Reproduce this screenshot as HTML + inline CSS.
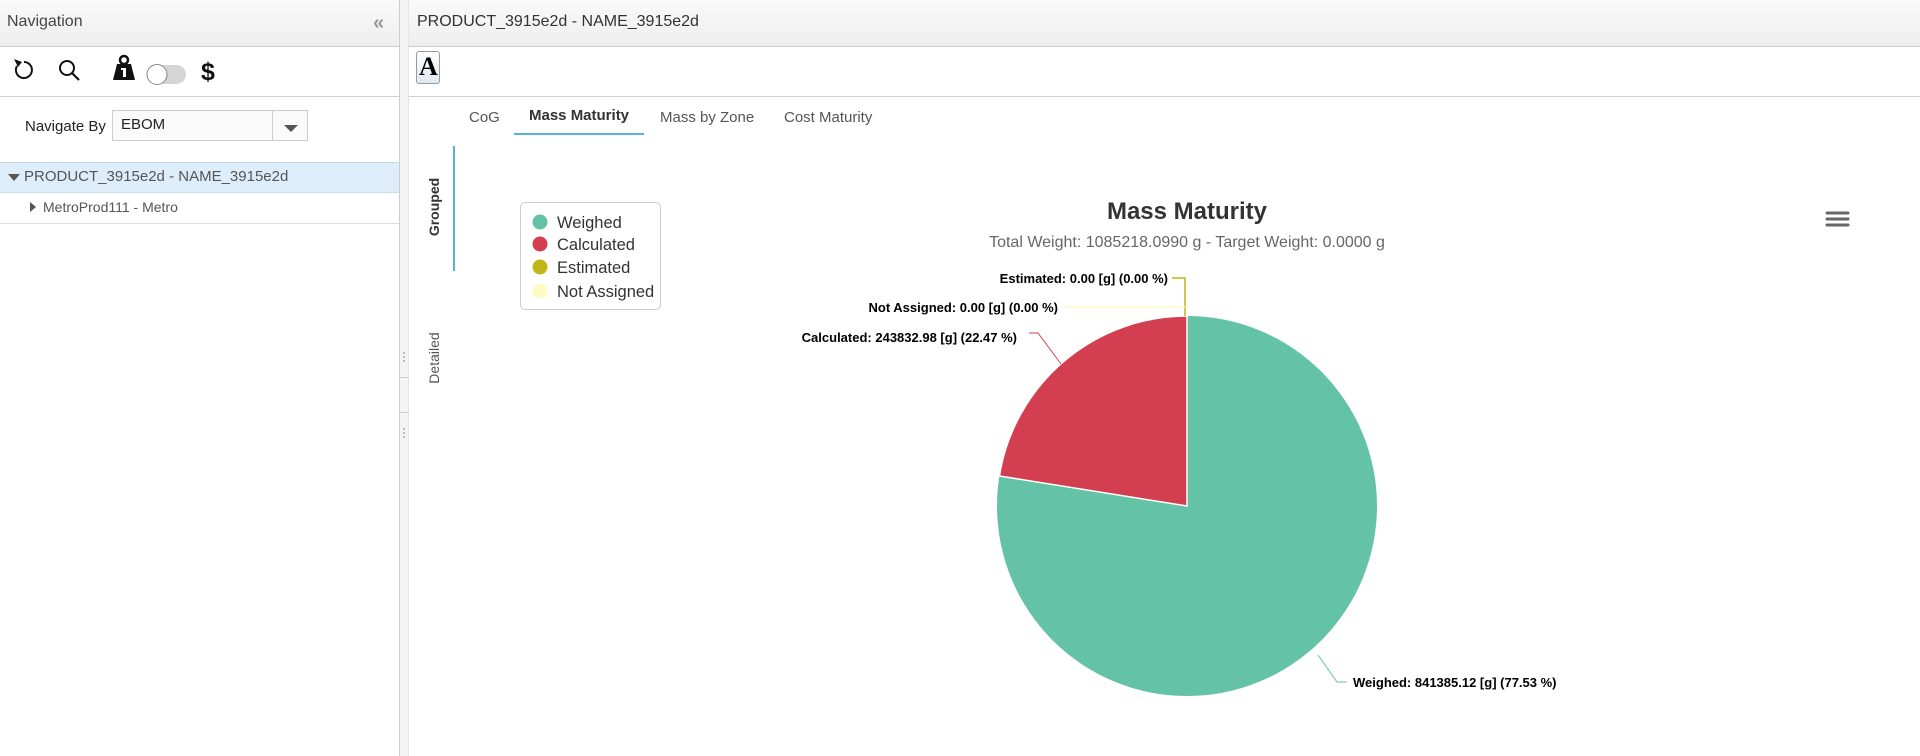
<!DOCTYPE html>
<html><head><meta charset="utf-8"><style>
*{box-sizing:border-box;margin:0;padding:0}
body{width:1920px;height:756px;overflow:hidden;background:#fff;font-family:"Liberation Sans",Arial,sans-serif;position:relative}
.abs{position:absolute}
.hdr{background:linear-gradient(#fafafa,#eeeeee);border-bottom:1px solid #c8c8c8}
</style></head><body>
<div class="abs hdr" style="left:0;top:0;width:400px;height:47px"></div>
<div class="abs" style="left:7px;top:13px;font-size:16px;color:#444">Navigation</div>
<div class="abs" style="left:373px;top:12px;font-size:20px;color:#999;font-weight:bold">«</div>
<div class="abs" style="left:0;top:96px;width:400px;height:1px;background:#d0d0d0"></div>
<svg class="abs" style="left:0;top:50px" width="400" height="44">
 <path d="M17 16 A8 8 0 1 0 24 12" fill="none" stroke="#111" stroke-width="2"/>
 <path d="M14 9 L18 17 L22 12 Z" fill="#111"/>
 <circle cx="67" cy="18" r="7" fill="none" stroke="#111" stroke-width="2"/>
 <path d="M72 23 L79 30" stroke="#111" stroke-width="2.2"/>
 <circle cx="124" cy="10" r="4" fill="none" stroke="#111" stroke-width="2.5"/>
 <path d="M117 14 L131 14 L135 30 L113 30 Z" fill="#111"/>
 <rect x="123" y="18" width="3" height="9" fill="#fff"/><rect x="121" y="18" width="4" height="2" fill="#fff"/>
 <rect x="147" y="15" width="39" height="19" rx="9.5" fill="#d5d5d5"/>
 <circle cx="157" cy="24.5" r="10" fill="#fff" stroke="#888" stroke-width="1"/>
 <text x="201" y="30" font-size="25" font-weight="bold" font-family="Liberation Sans" fill="#111">$</text>
</svg>
<div class="abs" style="left:25px;top:118px;font-size:15px;color:#222">Navigate By</div>
<div class="abs" style="left:112px;top:110px;width:196px;height:31px;border:1px solid #ccc;background:#fafafa"></div>
<div class="abs" style="left:121px;top:116px;font-size:15px;color:#222">EBOM</div>
<div class="abs" style="left:272px;top:111px;width:1px;height:29px;background:#ccc"></div>
<div class="abs" style="left:284px;top:125px;width:0;height:0;border-left:7px solid transparent;border-right:7px solid transparent;border-top:7px solid #555"></div>
<div class="abs" style="left:0;top:162px;width:399px;height:31px;background:#ddeefa;border-top:1px solid #bcd7ea;border-bottom:1px solid #c8dfee"></div>
<div class="abs" style="left:8px;top:174px;border-left:6px solid transparent;border-right:6px solid transparent;border-top:7px solid #555"></div>
<div class="abs" style="left:24px;top:168px;font-size:15px;color:#555">PRODUCT_3915e2d - NAME_3915e2d</div>
<div class="abs" style="left:30px;top:202px;border-top:5px solid transparent;border-bottom:5px solid transparent;border-left:6px solid #555"></div>
<div class="abs" style="left:43px;top:199px;font-size:14px;color:#555">MetroProd111 - Metro</div>
<div class="abs" style="left:0;top:223px;width:399px;height:1px;background:#ddd"></div>
<div class="abs" style="left:399px;top:0;width:10px;height:756px;background:#f4f4f4;border-left:1px solid #ccc;border-right:1px solid #e6e6e6"></div>
<div class="abs" style="left:399px;top:377px;width:10px;height:1px;background:#ccc"></div>
<div class="abs" style="left:399px;top:412px;width:10px;height:1px;background:#ccc"></div>
<div class="abs" style="left:403px;top:352px;width:2px;height:10px;border-left:2px dotted #bbb"></div>
<div class="abs" style="left:403px;top:428px;width:2px;height:10px;border-left:2px dotted #bbb"></div>
<div class="abs hdr" style="left:409px;top:0;width:1511px;height:47px"></div>
<div class="abs" style="left:417px;top:13px;font-size:16px;color:#333">PRODUCT_3915e2d - NAME_3915e2d</div>
<div class="abs" style="left:416px;top:51px;width:24px;height:33px;border:1px solid #999;border-radius:3px;background:linear-gradient(#fff,#dfe8f2)"></div>
<div class="abs" style="left:419px;top:52px;font-family:'Liberation Serif',serif;font-weight:bold;font-size:26px;color:#000">A</div>
<div class="abs" style="left:409px;top:96px;width:1511px;height:1px;background:#d0d0d0"></div>
<div class="abs" style="left:469px;top:109px;font-size:15px;color:#555">CoG</div>
<div class="abs" style="left:529px;top:107px;font-size:15px;color:#333;font-weight:bold">Mass Maturity</div>
<div class="abs" style="left:660px;top:109px;font-size:15px;color:#555">Mass by Zone</div>
<div class="abs" style="left:784px;top:109px;font-size:15px;color:#555">Cost Maturity</div>
<div class="abs" style="left:514px;top:133px;width:130px;height:2px;background:#5ab0da"></div>
<div class="abs" style="left:453px;top:146px;width:2px;height:125px;background:#5ab0da"></div>
<div class="abs" style="left:434px;top:207px;transform:translate(-50%,-50%) rotate(-90deg);font-size:14px;font-weight:bold;color:#333;white-space:nowrap">Grouped</div>
<div class="abs" style="left:434px;top:358px;transform:translate(-50%,-50%) rotate(-90deg);font-size:14px;color:#555;white-space:nowrap">Detailed</div>
<div class="abs" style="left:520px;top:202px;width:141px;height:108px;border:1px solid #ccc;border-radius:5px"></div>
<svg class="abs" style="left:0;top:0" width="1920" height="756" font-family="Liberation Sans,Arial,sans-serif">
 <circle cx="540" cy="222" r="7.5" fill="#64c2a6"/>
 <circle cx="540" cy="244" r="7.5" fill="#d33f50"/>
 <circle cx="540" cy="267" r="7.5" fill="#bfb515"/>
 <circle cx="540" cy="291" r="7.5" fill="#fdfcc2"/>
 <g font-size="16.5" fill="#333">
  <text x="557" y="228">Weighed</text><text x="557" y="250">Calculated</text>
  <text x="557" y="273">Estimated</text><text x="557" y="297">Not Assigned</text>
 </g>
 <text x="1187" y="219" text-anchor="middle" font-size="24" font-weight="bold" fill="#333">Mass Maturity</text>
 <text x="1187" y="247" text-anchor="middle" font-size="16" fill="#666">Total Weight: 1085218.0990 g - Target Weight: 0.0000 g</text>
 <path d="M1827 213h21M1827 219h21M1827 225h21" stroke="#666" stroke-width="3" stroke-linecap="round"/>
 <circle cx="1187" cy="506" r="190" fill="#64c2a6"/>
 <path d="M1187 506 L1187 316 A190 190 0 0 0 999.4 476 Z" fill="#d33f50" stroke="#fff" stroke-width="1.5"/>
 <path d="M1172 278 H1185 V316" fill="none" stroke="#bfb515" stroke-width="1.5"/>
 <path d="M1065 307 H1185" fill="none" stroke="#fdfcc2" stroke-width="1.5"/>
 <path d="M1029 333 H1038 L1061 364" fill="none" stroke="#d33f50" stroke-width="1"/>
 <path d="M1318 655 L1337 682 H1347" fill="none" stroke="#64c2a6" stroke-width="1"/>
 <g font-size="13" font-weight="bold" fill="#000">
  <text x="1168" y="283" text-anchor="end">Estimated: 0.00 [g] (0.00 %)</text>
  <text x="1058" y="312" text-anchor="end">Not Assigned: 0.00 [g] (0.00 %)</text>
  <text x="1017" y="342" text-anchor="end">Calculated: 243832.98 [g] (22.47 %)</text>
  <text x="1353" y="687">Weighed: 841385.12 [g] (77.53 %)</text>
 </g>
</svg>
</body></html>
